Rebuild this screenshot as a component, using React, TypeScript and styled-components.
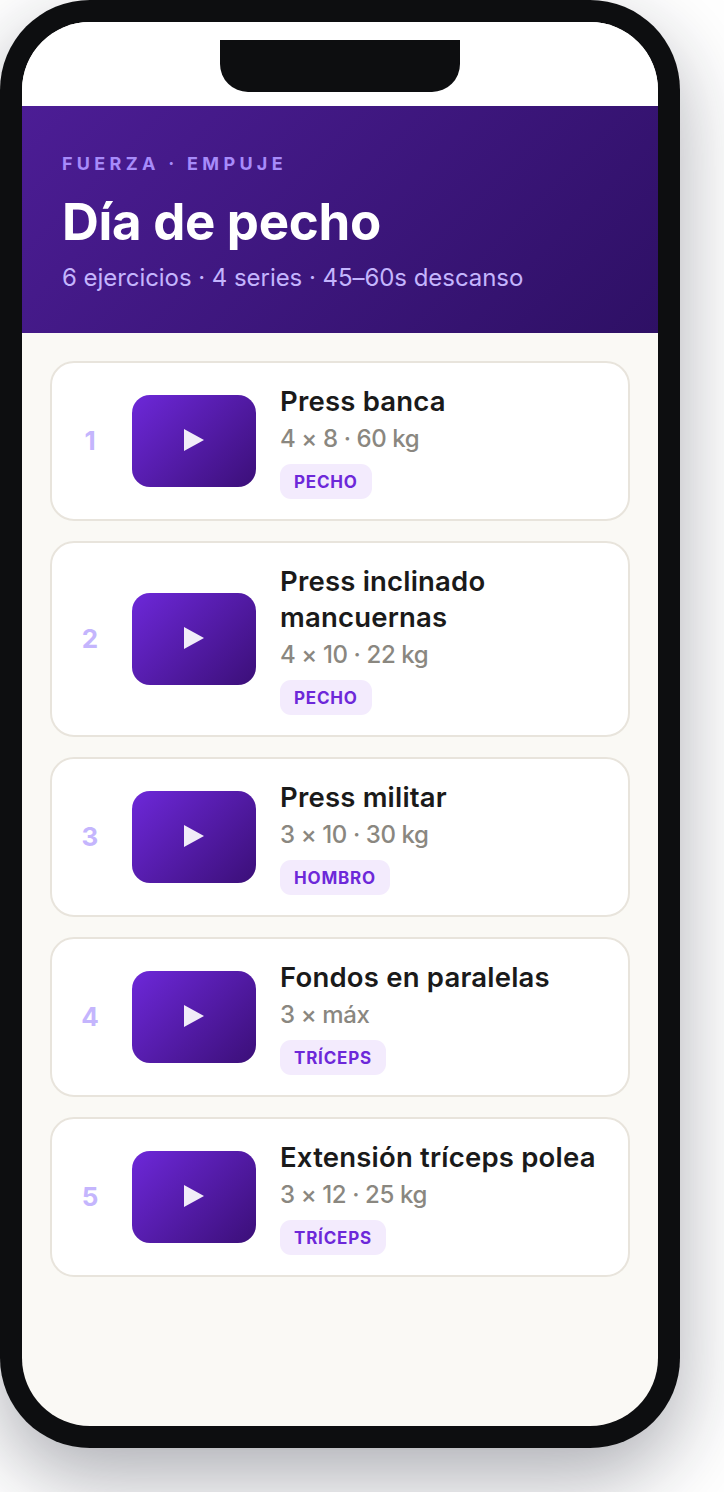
import styled, { createGlobalStyle } from 'styled-components'

const GlobalStyle = createGlobalStyle`
  html, body {
    margin: 0;
    padding: 0;
    background: #fff;
    font-family: Inter, "Noto Sans", sans-serif;
  }
  * { box-sizing: border-box; }
`

const Page = styled.div`
  width: 724px;
  height: 1492px;
  overflow: hidden;
`

const Phone = styled.div`
  position: relative;
  width: 680px;
  height: 1448px;
  padding: 22px;
  border-radius: 90px;
  background: #0d0e10;
  box-shadow: 0 30px 80px rgba(20, 24, 40, 0.35);
`

const Notch = styled.div`
  position: absolute;
  top: 40px;
  left: 220px;
  width: 240px;
  height: 52px;
  border-radius: 0 0 28px 28px;
  background: #0d0e10;
`

const Screen = styled.div`
  height: 1404px;
  border-radius: 68px;
  overflow: hidden;
  background: #faf9f5;
`

const StatusBar = styled.div`
  height: 84px;
  background: #fff;
`

const Header = styled.header`
  height: 227px;
  padding: 45px 40px 0;
  background: linear-gradient(135deg, #4c1d95, #2e1065);
`

const Eyebrow = styled.div`
  font-size: 18px;
  line-height: 26px;
  font-weight: 700;
  letter-spacing: 4.3px;
  color: #a78bfa;
`

const Title = styled.h1`
  margin: 14px 0 0;
  font-size: 51px;
  line-height: 62px;
  font-weight: 700;
  letter-spacing: -0.3px;
  color: #fff;
`

const Summary = styled.p`
  margin: 9px 0 0;
  font-size: 24px;
  line-height: 32px;
  letter-spacing: -0.05px;
  color: #c4b5fd;
`

const List = styled.main`
  display: flex;
  flex-direction: column;
  gap: 20px;
  padding: 28px 28px 0;
`

const Card = styled.article`
  display: flex;
  align-items: center;
  padding: 20px 24px;
  border: 2px solid #e8e4dc;
  border-radius: 24px;
  background: #fff;
`

const Index = styled.span`
  flex: 0 0 28px;
  margin-right: 28px;
  padding-bottom: 2px;
  font-size: 26px;
  font-weight: 700;
  text-align: center;
  color: #c4b5fd;
`

const Thumb = styled.div`
  flex: 0 0 124px;
  height: 92px;
  display: flex;
  align-items: center;
  justify-content: center;
  margin-right: 24px;
  border-radius: 18px;
  background: linear-gradient(135deg, #6d28d9, #3b0f78);
`

const PlayIcon = styled.svg`
  width: 20px;
  height: 22px;
  margin-bottom: 2px;
  fill: rgba(255, 255, 255, 0.92);
`

const Details = styled.div`
  flex: 1;
  min-width: 0;
`

const Name = styled.div`
  font-size: 27.5px;
  line-height: 36px;
  font-weight: 600;
  letter-spacing: 0.2px;
  color: #1a1a1a;
`

const Meta = styled.div`
  margin-top: 4px;
  font-size: 24px;
  line-height: 32px;
  font-weight: 500;
  letter-spacing: -0.4px;
  color: #8a8780;
`

const Tag = styled.span`
  display: inline-block;
  height: 35px;
  margin-top: 9px;
  padding: 0 14px;
  border-radius: 11px;
  background: #f3ebfd;
  font-size: 17px;
  line-height: 37px;
  font-weight: 700;
  letter-spacing: 0.8px;
  color: #6d28d9;
  vertical-align: top;
`

const exercises = [
  { name: 'Press banca', meta: '4 × 8 · 60 kg', tag: 'PECHO' },
  { name: 'Press inclinado mancuernas', meta: '4 × 10 · 22 kg', tag: 'PECHO' },
  { name: 'Press militar', meta: '3 × 10 · 30 kg', tag: 'HOMBRO' },
  { name: 'Fondos en paralelas', meta: '3 × máx', tag: 'TRÍCEPS' },
  { name: 'Extensión tríceps polea', meta: '3 × 12 · 25 kg', tag: 'TRÍCEPS' },
]

export default function App() {
  return (
    <Page>
      <GlobalStyle />
      <Phone>
        <Notch />
        <Screen>
          <StatusBar />
          <Header>
            <Eyebrow>FUERZA · EMPUJE</Eyebrow>
            <Title>Día de pecho</Title>
            <Summary>6 ejercicios · 4 series · 45–60s descanso</Summary>
          </Header>
          <List>
            {exercises.map((exercise, i) => (
              <Card key={exercise.name}>
                <Index>{i + 1}</Index>
                <Thumb>
                  <PlayIcon viewBox="0 0 20 22">
                    <path d="M0 0 L20 11 L0 22 Z" />
                  </PlayIcon>
                </Thumb>
                <Details>
                  <Name>{exercise.name}</Name>
                  <Meta>{exercise.meta}</Meta>
                  <Tag>{exercise.tag}</Tag>
                </Details>
              </Card>
            ))}
          </List>
        </Screen>
      </Phone>
    </Page>
  )
}
